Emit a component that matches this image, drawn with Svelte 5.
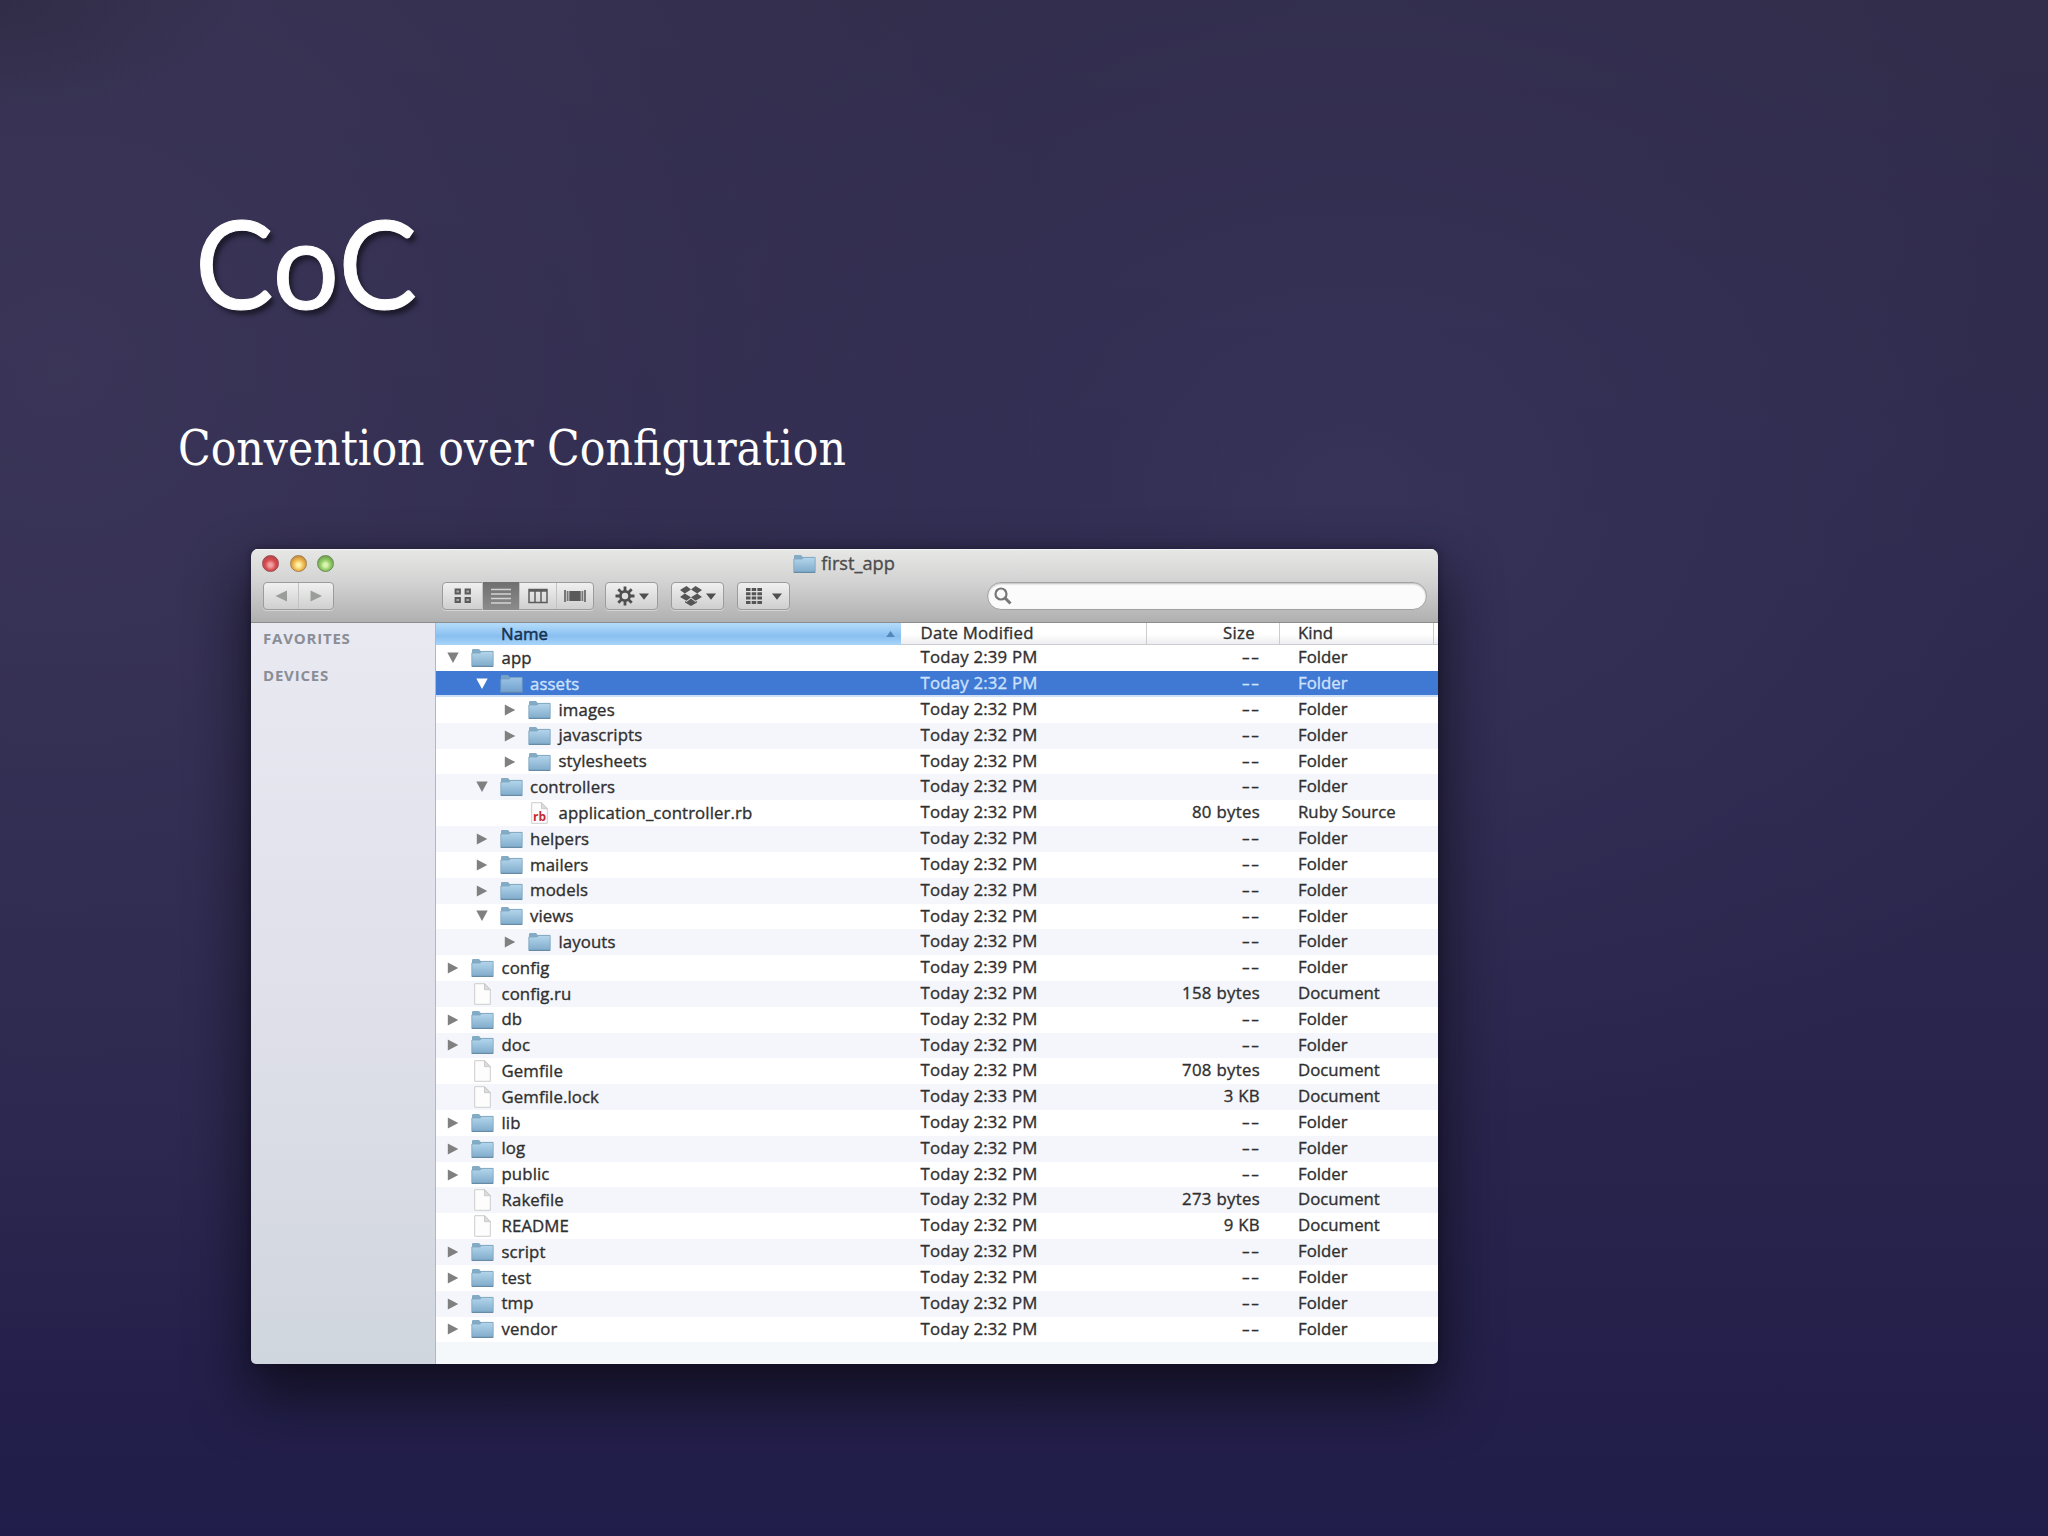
<script lang="ts">
  interface Entry {
    name: string;
    level: number;
    icon: 'folder' | 'doc' | 'ruby';
    open?: boolean;
    date?: string;
    size?: string;
    kind?: string;
  }

  const entries: Entry[] = [
    { name: 'app', level: 0, icon: 'folder', open: true, date: '2:39' },
    { name: 'assets', level: 1, icon: 'folder', open: true },
    { name: 'images', level: 2, icon: 'folder' },
    { name: 'javascripts', level: 2, icon: 'folder' },
    { name: 'stylesheets', level: 2, icon: 'folder' },
    { name: 'controllers', level: 1, icon: 'folder', open: true },
    { name: 'application_controller.rb', level: 2, icon: 'ruby', size: '80 bytes', kind: 'Ruby Source' },
    { name: 'helpers', level: 1, icon: 'folder' },
    { name: 'mailers', level: 1, icon: 'folder' },
    { name: 'models', level: 1, icon: 'folder' },
    { name: 'views', level: 1, icon: 'folder', open: true },
    { name: 'layouts', level: 2, icon: 'folder' },
    { name: 'config', level: 0, icon: 'folder', date: '2:39' },
    { name: 'config.ru', level: 0, icon: 'doc', size: '158 bytes', kind: 'Document' },
    { name: 'db', level: 0, icon: 'folder' },
    { name: 'doc', level: 0, icon: 'folder' },
    { name: 'Gemfile', level: 0, icon: 'doc', size: '708 bytes', kind: 'Document' },
    { name: 'Gemfile.lock', level: 0, icon: 'doc', date: '2:33', size: '3 KB', kind: 'Document' },
    { name: 'lib', level: 0, icon: 'folder' },
    { name: 'log', level: 0, icon: 'folder' },
    { name: 'public', level: 0, icon: 'folder' },
    { name: 'Rakefile', level: 0, icon: 'doc', size: '273 bytes', kind: 'Document' },
    { name: 'README', level: 0, icon: 'doc', size: '9 KB', kind: 'Document' },
    { name: 'script', level: 0, icon: 'folder' },
    { name: 'test', level: 0, icon: 'folder' },
    { name: 'tmp', level: 0, icon: 'folder' },
    { name: 'vendor', level: 0, icon: 'folder' },
  ];

  let selected = $state('assets');
</script>

{#snippet folder()}
  <svg class="folder" viewBox="0 0 23 20">
    <defs>
      <linearGradient id="folder-fill" x1="0" y1="0" x2="0" y2="1">
        <stop offset="0" stop-color="#b4d6ec" />
        <stop offset="1" stop-color="#7fabcb" />
      </linearGradient>
    </defs>
    <path d="M1 4.500V2.200Q1 1 2.200 1H8l1.800 2H22v4H1z" fill="#84abc5" />
    <path d="M.8 5H9l1.800-1.600h11.400V18.500H.8z" fill="url(#folder-fill)" stroke="#7da3bd" stroke-width=".8" />
    <path d="M1 18.400h21" stroke="#688ba5" stroke-width="1.200" />
  </svg>
{/snippet}

{#snippet caret()}
  <svg class="caret" viewBox="0 0 10 7"><path d="M0 .5h10L5 6.800z" fill="#4f4f4f" /></svg>
{/snippet}

<main class="slide">
  <h1><span>CoC</span></h1>
  <p class="subtitle"><span>Convention over Configuration</span></p>

  <section class="window">
    <header class="chrome">
      <div class="titlebar">
        <div class="lights">
          <span class="light red"></span>
          <span class="light yellow"></span>
          <span class="light green"></span>
        </div>
        <div class="title">{@render folder()}<span>first_app</span></div>
      </div>

      <div class="toolbar">
        <div class="group nav">
          <button aria-label="Back">
            <svg width="12" height="12" viewBox="0 0 12 12"><path d="M12 .5v11L.5 6z" fill="#9b9d9b" /></svg>
          </button>
          <button aria-label="Forward">
            <svg width="12" height="12" viewBox="0 0 12 12"><path d="M.5 .5v11L12 6z" fill="#9b9d9b" /></svg>
          </button>
        </div>

        <div class="group views">
          <button aria-label="Icons">
            <svg width="18" height="16" viewBox="0 0 18 16" fill="#a8a8a8" stroke="#5a5a5a" stroke-width="1.800">
              <path d="M1.500 1.500h4.500v4H1.500zM11.500 1.500H16v4h-4.500zM1.500 10h4.500v4H1.500zM11.500 10H16v4h-4.500z" />
            </svg>
          </button>
          <button class="active" aria-label="List">
            <svg width="20" height="16" viewBox="0 0 20 16" stroke="#d2d2d2" stroke-width="1.400">
              <path d="M0 1.500h20M0 6h20M0 10.500h20M0 15h20" />
            </svg>
          </button>
          <button aria-label="Columns">
            <svg width="20" height="16" viewBox="0 0 20 16" fill="none" stroke="#5c5c5c" stroke-width="1.500">
              <path d="M1 1.500h18v13H1zM7 1.500v13M13 1.500v13M1 3h18" />
            </svg>
          </button>
          <button aria-label="Cover Flow">
            <svg width="22" height="14" viewBox="0 0 22 14" fill="#777">
              <path d="M0 1h2v12H0zM2.700 2h1.800v10H2.700zM17.500 2h1.800v10h-1.800zM20 1h2v12h-2z" />
              <path d="M5.300 2h11.400v10H5.300z" fill="#5a5a5a" />
            </svg>
          </button>
        </div>

        <button class="menu" aria-label="Actions">
          <svg width="20" height="20" viewBox="-10 -10 20 20">
            <g stroke="#4f4f4f" stroke-width="2.800">
              <path d="M0-9.500V9.500M-9.500 0h19M-6.700-6.700l13.400 13.400M-6.700 6.700L6.700-6.700" />
            </g>
            <circle r="6" fill="#4f4f4f" />
            <circle r="3.200" fill="#dedede" />
          </svg>
          {@render caret()}
        </button>
        <button class="menu" aria-label="Dropbox">
          <svg width="22" height="20" viewBox="0 0 22 20" fill="#555">
            <path d="M6.500 0L11 3.500 4.800 7.500 0 4zM15.500 0L11 3.500l6.200 4L22 4zM0 11l4.800-3.500L11 11.300l-4.500 3.500zM22 11l-4.800-3.500L11 11.300l4.500 3.500zM5 15l1.500 1L11 12.500l4.500 3.500 1.500-1v1.500L11 20l-6-3.500z" />
          </svg>
          {@render caret()}
        </button>
        <button class="menu wide" aria-label="Arrange">
          <svg width="16" height="16" viewBox="0 0 16 16" fill="#555">
            <path d="M0 0h4.500v3H0zM5.700 0h4.500v3H5.700zM11.400 0H16v3h-4.600zM0 4.300h4.500v3H0zM5.700 4.300h4.500v3H5.700zM11.400 4.300H16v3h-4.600zM0 8.600h4.500v3H0zM5.700 8.600h4.500v3H5.700zM11.400 8.600H16v3h-4.600zM0 13h4.500v3H0zM5.700 13h4.500v3H5.700zM11.400 13H16v3h-4.600z" />
          </svg>
          {@render caret()}
        </button>

        <div class="search">
          <svg width="18" height="18" viewBox="0 0 18 18" fill="none" stroke="#777" stroke-width="2.200">
            <circle cx="7" cy="7" r="5.500" />
            <path d="M11 11l5.500 5.500" stroke-width="3" />
          </svg>
        </div>
      </div>
    </header>

    <div class="body">
      <aside class="sidebar">
        <h2>FAVORITES</h2>
        <h2>DEVICES</h2>
      </aside>

      <div class="list">
        <div class="row head">
          <div class="name sorted">
            <span>Name</span>
            <svg width="9" height="6" viewBox="0 0 10 7"><path d="M5 0l5 7H0z" fill="#5288b8" /></svg>
          </div>
          <div class="date">Date Modified</div>
          <div class="size">Size</div>
          <div class="kind">Kind</div>
        </div>

        {#each entries as entry (entry.name)}
          <!-- svelte-ignore a11y_click_events_have_key_events, a11y_no_static_element_interactions -->
          <div class="row" class:selected={entry.name === selected} onclick={() => (selected = entry.name)}>
            <div class="name level-{entry.level}">
              <span class="toggle">
                {#if entry.icon === 'folder'}
                  <svg width="12" height="12" viewBox="0 0 12 12">
                    <path d={entry.open ? 'M.3 .5h11.400L6 11z' : 'M.8 .5v11L11.300 6z'} />
                  </svg>
                {/if}
              </span>
              <span class="icon">
                {#if entry.icon === 'folder'}
                  {@render folder()}
                {:else}
                  <svg width="17" height="22" viewBox="0 0 17 22">
                    <path d="M.7 .7h9.800l5.800 6v14.600H.7z" fill="#fdfdfd" stroke="#cdcdcd" />
                    <path d="M10.500 .7v6h5.800z" fill="#dcdcdc" stroke="#c3c3c3" stroke-width=".8" />
                    {#if entry.icon === 'ruby'}
                      <text x="8.500" y="18.500" text-anchor="middle">rb</text>
                    {/if}
                  </svg>
                {/if}
              </span>
              <span class="label">{entry.name}</span>
            </div>
            <div class="date">Today {entry.date ?? '2:32'} PM</div>
            <div class="size">
              {#if entry.size}{entry.size}{:else}<span class="dashes">--</span>{/if}
            </div>
            <div class="kind">{entry.kind ?? 'Folder'}</div>
          </div>
        {/each}
      </div>
    </div>
  </section>
</main>

<style>
  :global(body) {
    margin: 0;
    background: #2b274b;
  }

  .slide {
    box-sizing: border-box;
    width: 2048px;
    height: 1536px;
    padding: 182px 0 0 251px;
    overflow: hidden;
    color: #fff;
    background:
      radial-gradient(ellipse 240px 120px at 0 0, rgba(44, 40, 62, 0.6), transparent),
      radial-gradient(ellipse 1000px 1000px at 3% 24%, rgba(62, 57, 92, 0.75), transparent),
      radial-gradient(ellipse 850px 650px at 66% 32%, rgba(58, 54, 94, 0.65), transparent),
      linear-gradient(180deg, #322d4b 0%, #2d294d 40%, #28244c 75%, #211d4a 100%);
  }

  h1 {
    height: 160px;
    margin: 0 0 0 -56px;
    font: 400 122px/160px Lato, sans-serif;
    text-shadow: 4px 5px 5px rgba(0, 0, 0, 0.5);
  }

  h1 span,
  .subtitle span {
    display: inline-block;
    transform-origin: 0 50%;
  }

  h1 span {
    transform: scaleX(0.965);
    -webkit-text-stroke: 1px #fff;
  }

  .subtitle {
    height: 70px;
    margin: 71px 0 66px -73px;
    font: 400 48px/70px 'DejaVu Serif Condensed', 'DejaVu Serif', serif;
    font-stretch: condensed;
  }

  .subtitle span {
    transform: scaleX(0.988);
  }

  .window {
    display: flex;
    flex-direction: column;
    width: 1187px;
    height: 815px;
    border-radius: 7px 7px 5px 5px;
    overflow: hidden;
    color: #303030;
    font: 500 16.800px/25px 'Open Sans', sans-serif;
    -webkit-text-stroke: 0.350px;
    box-shadow: 0 30px 56px 4px rgba(12, 10, 20, 0.75), 0 0 8px rgba(10, 8, 20, 0.4);
  }

  .chrome {
    height: 73px;
    background: linear-gradient(#e7e8e6, #d0d0d0 50%, #b0b0b0);
    border-bottom: 1px solid #8d8d8d;
    box-shadow: inset 0 1px #f3f3f3;
  }

  .titlebar {
    display: grid;
    grid-template-columns: 1fr auto 1fr;
    align-items: center;
    height: 29px;
    padding: 0 12px 0 11px;
  }

  .lights {
    display: flex;
    gap: 10.500px;
  }

  .light {
    box-sizing: border-box;
    width: 17px;
    height: 17px;
    border-radius: 50%;
    border: 1px solid;
  }

  .red {
    border-color: #9c4b4b;
    background: radial-gradient(circle at 50% 60%, #f0a0a0 0 15%, #d94a50 45%, #b0464a 80%);
  }

  .yellow {
    border-color: #a5804b;
    background: radial-gradient(circle at 50% 60%, #fff0a8 0 15%, #f0b84c 45%, #bd8840 80%);
  }

  .green {
    border-color: #6a8c55;
    background: radial-gradient(circle at 50% 60%, #d8f5b0 0 15%, #8fca62 45%, #6c9a50 80%);
  }

  .title {
    display: flex;
    align-items: center;
    gap: 5px;
    color: #4c4c4c;
    font-size: 18.200px;
  }

  .folder {
    display: block;
    width: 23px;
    height: 20px;
  }

  .toolbar {
    display: flex;
    align-items: center;
    height: 36px;
    padding: 0 11px 0 12px;
  }

  button {
    display: flex;
    align-items: center;
    justify-content: center;
    box-sizing: border-box;
    padding: 0;
    border: 0;
    background: none;
  }

  .group,
  .menu {
    box-sizing: border-box;
    height: 28px;
    border: 1px solid #9c9c9c;
    border-radius: 4px;
    background: linear-gradient(#f0f0f0, #cfcfcf);
    box-shadow: 0 1px rgba(255, 255, 255, 0.4);
  }

  .group {
    display: flex;
  }

  .group button {
    flex: 1;
  }

  .group button + button {
    border-left: 1px solid #c2c2c2;
  }

  .nav {
    width: 71px;
    margin-right: 108px;
  }

  .views {
    width: 152px;
    margin-right: 11px;
  }

  .views button:first-child {
    flex: 0 0 39px;
  }

  .views .active {
    margin: -1px 0;
    background: linear-gradient(#6f6f6f, #8c8c8c);
  }

  .menu {
    gap: 4px;
    width: 53px;
    margin-right: 13px;
  }

  .menu.wide {
    gap: 10px;
    margin-right: 0;
  }

  .caret {
    width: 10px;
    height: 7px;
  }

  .search {
    display: flex;
    align-items: center;
    box-sizing: border-box;
    width: 440px;
    height: 28px;
    margin-left: auto;
    padding-left: 6px;
    border: 1px solid #a2a2a2;
    border-radius: 14px;
    background: #fbfbfb;
    box-shadow: inset 0 1px 2px rgba(0, 0, 0, 0.25);
  }

  .body {
    display: flex;
    flex: 1;
  }

  .sidebar {
    box-sizing: border-box;
    width: 185px;
    padding: 4px 0 0 12px;
    border-right: 1px solid #b2b7bf;
    background: linear-gradient(#e8e9f1, #dedfe9 55%, #d0d6de);
  }

  h2 {
    height: 22px;
    margin: 0 0 15px;
    color: #8a8d95;
    font: 700 15px/22px 'Open Sans', sans-serif;
    letter-spacing: 0.800px;
    -webkit-text-stroke: 0;
  }

  .list {
    flex: 1;
    background: #f5f8fa;
  }

  .row {
    display: grid;
    grid-template-columns: 465px 246px 133px 1fr;
    height: 25.820px;
    background: #fff;
    line-height: 24.500px;
    white-space: nowrap;
  }

  .row:nth-child(odd) {
    background: #f4f6fb;
  }

  .row.head {
    height: 22.400px;
    line-height: 20px;
    background: linear-gradient(#fff 50%, #ececef);
    box-shadow: inset 0 -1px #c9ccd0;
  }

  .row.selected {
    color: #cfe2ff;
    background: #3f79d3;
    box-shadow: inset 0 -2px #cfdff5;
  }

  .name {
    display: flex;
    align-items: center;
    padding-left: 10px;
  }

  .level-1 {
    padding-left: 38.500px;
  }

  .level-2 {
    padding-left: 67px;
  }

  .sorted {
    justify-content: space-between;
    padding: 0 6px 0 65px;
    color: #16324f;
    -webkit-text-stroke: 0.500px;
    background: linear-gradient(#b4dcfb, #88bff0 60%, #a8d4fa);
  }

  .toggle {
    width: 24px;
    padding-left: 1px;
    line-height: 0;
    fill: #808080;
  }

  .selected .toggle {
    fill: #fff;
  }

  .icon {
    display: flex;
    justify-content: center;
    width: 23px;
    margin-right: 7.500px;
  }

  .selected .folder {
    opacity: 0.8;
  }

  .icon text {
    fill: #c22b34;
    font: 700 12px 'Open Sans', sans-serif;
  }

  .label {
    letter-spacing: 0.100px;
  }

  .date {
    padding-left: 19.500px;
    letter-spacing: 0.200px;
  }

  .size {
    padding-right: 20px;
    text-align: right;
    letter-spacing: 0.300px;
  }

  .dashes {
    display: inline-block;
    transform: scaleX(1.500);
    transform-origin: 100% 50%;
    letter-spacing: 0.800px;
  }

  .kind {
    padding-left: 18px;
  }

  .head .date {
    border-right: 1px solid #ccc;
  }

  .head .size {
    padding-right: 24px;
    border-right: 1px solid #ccc;
  }

  .head .kind {
    margin-right: 4px;
    border-right: 1px solid #ccc;
  }
</style>
